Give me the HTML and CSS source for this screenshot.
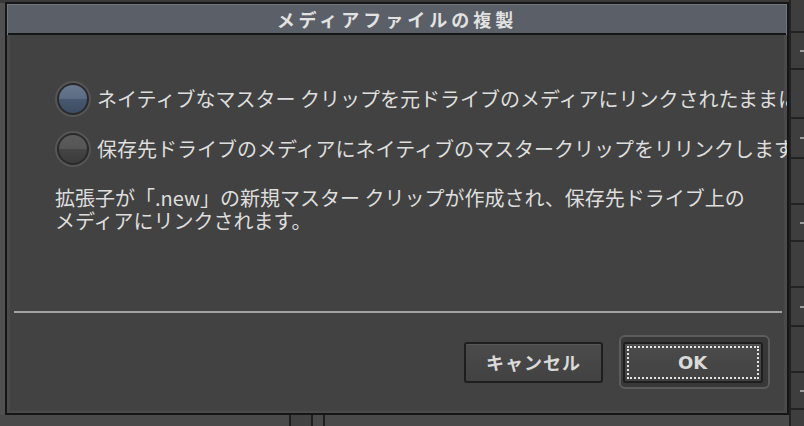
FILE: index.html
```html
<!DOCTYPE html>
<html lang="ja">
<head>
<meta charset="utf-8">
<title>メディアファイルの複製</title>
<link rel="stylesheet" href="styles.css">
</head>
<body>
<div class="desktop">
  <div class="bg-top"></div>
  <div class="bg-right">
    <div class="cell h31"></div>
    <div class="cell h35"><i></i></div>
    <div class="cell h47"></div>
    <div class="cell h38"><i></i></div>
    <div class="cell h44"></div>
    <div class="cell h35"><i></i></div>
    <div class="cell h44"></div>
    <div class="cell h37"><i></i></div>
    <div class="cell h44"></div>
    <div class="cell h35"><i></i></div>
    <div class="cell rest"></div>
  </div>
  <div class="bg-bottom">
    <span class="col c1"></span>
    <span class="col c2"></span>
  </div>

  <div class="dialog">
    <div class="titlebar">メディアファイルの複製</div>
    <div class="dlg-body">
      <div class="options">
        <div class="opt">
          <span class="radio on"></span>
          <span class="opt-text">ネイティブなマスター クリップを元ドライブのメディアにリンクされたままにします</span>
        </div>
        <div class="opt">
          <span class="radio"></span>
          <span class="opt-text">保存先ドライブのメディアにネイティブのマスタークリップをリリンクします</span>
        </div>
      </div>
      <p class="desc">拡張子が「.new」の新規マスター クリップが作成され、保存先ドライブ上の<br>メディアにリンクされます。</p>
      <div class="spacer"></div>
      <div class="sep"></div>
      <div class="footer">
        <button class="btn">キャンセル</button>
        <div class="default-ring">
          <button class="btn ok"><span class="focus">OK</span></button>
        </div>
      </div>
    </div>
  </div>
</div>
</body>
</html>
```

FILE: styles.css
```css
* { box-sizing: border-box; }

html, body {
  margin: 0;
  padding: 0;
  background: #4b4b4b;
}

body {
  font-family: "Noto Sans CJK JP", "Noto Sans", sans-serif;
  color: #dcdcdc;
}

.desktop {
  position: relative;
  width: 804px;
  height: 426px;
  overflow: hidden;
  background: #505050;
}

.bg-top {
  position: absolute;
  left: 0;
  top: 0;
  width: 804px;
  height: 3px;
  background: #3a3a3a;
}

.bg-right {
  position: absolute;
  left: 789px;
  top: 0;
  width: 15px;
  height: 426px;
  background: #222;
  display: flex;
  flex-direction: column;
  gap: 2px;
  padding-left: 2px;
}

.bg-right .cell {
  flex: none;
  background: #3e3e3e;
  display: flex;
  align-items: center;
  justify-content: flex-end;
}
.bg-right .h31 { height: 31px; }
.bg-right .h35 { height: 35px; }
.bg-right .h37 { height: 37px; }
.bg-right .h38 { height: 38px; }
.bg-right .h44 { height: 44px; }
.bg-right .h47 { height: 47px; }
.bg-right .rest { flex: 1; }

.bg-right .cell i {
  display: block;
  width: 4px;
  height: 2px;
  background: #9a9a9a;
}

.bg-bottom {
  position: absolute;
  left: 0;
  top: 415px;
  width: 789px;
  height: 11px;
  background: #4a4a4a;
  display: flex;
  padding-left: 289px;
  gap: 10px;
}

.bg-bottom .col {
  display: block;
  height: 100%;
  border-left: 2px solid #1e1e1e;
  border-right: 2px solid #1e1e1e;
  background: #424242;
}
.bg-bottom .c1 { width: 24px; }
.bg-bottom .c2 { width: 2px; border-right: 0; }

.dialog {
  position: absolute;
  left: 5px;
  top: 2px;
  width: 784px;
  height: 413px;
  border: 2px solid #161616;
  display: flex;
  flex-direction: column;
  background: #424242;
}

.titlebar {
  height: 31px;
  flex: none;
  background: #5b5f67;
  border: 1px solid #72767e;
  border-bottom: none;
  box-shadow: inset 0 -2px 0 #161616;
  padding-bottom: 2px;
  display: flex;
  align-items: center;
  justify-content: center;
  font-size: 18px;
  font-weight: 700;
  letter-spacing: 4px;
  color: #e2e2e2;
}

.dlg-body {
  flex: 1;
  display: flex;
  flex-direction: column;
  overflow: hidden;
  background: #424242;
  box-shadow: inset 3px 0 0 #4a4a4a, inset -3px 0 0 #4a4a4a, inset 0 -2px 0 #4a4a4a;
  padding: 46px 3px 0 48px;
}

.options {
  display: flex;
  flex-direction: column;
  gap: 14px;
}

.opt {
  display: flex;
  align-items: center;
  gap: 6px;
  height: 36px;
  white-space: nowrap;
  font-size: 20px;
  line-height: 24px;
}

.radio {
  flex: none;
  width: 36px;
  height: 36px;
  border-radius: 50%;
  border: 2px solid #555;
  background: #2a2a2a;
  padding: 2px;
  display: block;
}

.radio::before {
  content: "";
  display: block;
  width: 100%;
  height: 100%;
  border-radius: 50%;
  background: linear-gradient(#5b5b5b 0%, #565656 48%, #444 52%, #3b3b3b 100%);
}

.radio.on::before {
  background: linear-gradient(#67788f 0%, #5b6c84 48%, #46586f 52%, #3d4d63 100%);
}

.opt-text {
  color: #dedede;
}

.desc {
  margin: 19px 0 0 0;
  font-size: 20px;
  line-height: 23px;
  color: #dedede;
  white-space: nowrap;
}

.spacer { flex: 1; }

.sep {
  flex: none;
  height: 2px;
  background: #a2a2a2;
  margin: 0 2px 0 -41px;
}

.footer {
  flex: none;
  height: 100px;
  display: flex;
  align-items: center;
  justify-content: flex-end;
  gap: 16px;
  padding-right: 14px;
  padding-bottom: 2px;
}

.btn {
  font-family: "Noto Sans CJK JP", "Noto Sans", sans-serif;
  font-size: 18px;
  font-weight: 700;
  letter-spacing: 1px;
  color: #dadada;
  width: 139px;
  height: 41px;
  border: 2px solid #1e1e1e;
  border-radius: 3px;
  background: linear-gradient(#4b4b4b, #424242);
  box-shadow: inset 0 1px 0 #565656;
  padding: 0;
  margin: 0;
  display: flex;
  align-items: center;
  justify-content: center;
}

.default-ring {
  width: 151px;
  height: 54px;
  border: 2px solid #5c5c5c;
  border-radius: 6px;
  background: #383838;
  display: flex;
  align-items: center;
  justify-content: center;
  padding-right: 4px;
}

.btn.ok {
  width: 140px;
  letter-spacing: 0;
  padding: 2px;
}

.focus {
  display: flex;
  align-items: center;
  justify-content: center;
  width: 100%;
  height: 100%;
  border: 2px dotted #e4e4e4;
  font-family: "DejaVu Sans", sans-serif;
  font-size: 18px;
}
```
